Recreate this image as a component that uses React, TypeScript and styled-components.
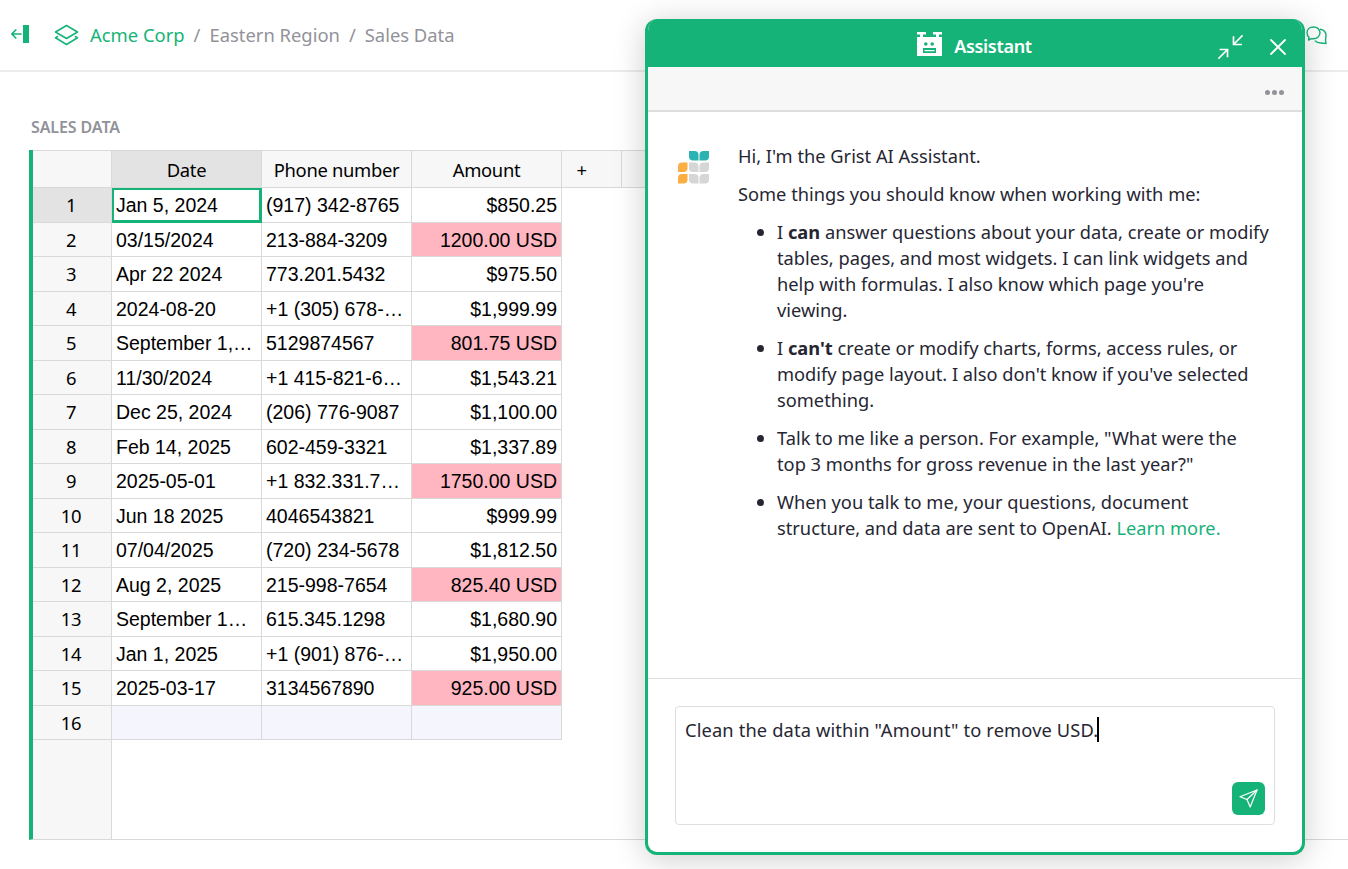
import React from "react";
import styled, { createGlobalStyle } from "styled-components";

const GREEN = "#16b378";
const UI = `"Noto Sans", "Open Sans", sans-serif`;
const CELL = `"Liberation Sans", Arial, sans-serif`;

const Global = createGlobalStyle`
  html, body { margin: 0; padding: 0; height: 869px; overflow: hidden; background: #fff; }
  #root { height: 869px; }
  * { box-sizing: border-box; }
`;

const Page = styled.div`
  width: 1348px;
  height: 869px;
  position: relative;
  font-family: ${UI};
  overflow: hidden;
`;
const TopBar = styled.header`
  height: 72px;
  border-bottom: 2px solid #ececec;
  display: flex;
  align-items: center;
  padding: 0 21px 0 10px;
`;
const Crumbs = styled.nav`
  display: flex;
  align-items: center;
  margin: 0 0 2px 24px;
  font-size: 18.4px;
  color: #929299;
`;
const StackIcon = styled.svg`
  margin-top: 2px;
`;
const CrumbLink = styled.span`
  color: ${GREEN};
  margin-left: 11px;
`;
const Sep = styled.span`
  margin: 0 9px;
`;
const CommentBtn = styled.div`
  margin-left: auto;
  display: flex;
`;
const Section = styled.main`
  padding: 45px 0 0 29px;
`;
const Title = styled.h2`
  margin: 0 0 13px 2px;
  font-size: 16px;
  line-height: 20px;
  font-weight: 600;
  letter-spacing: -0.1px;
  color: #929299;
`;
const GridFrame = styled.section`
  height: 690px;
  border-left: 4px solid ${GREEN};
  border-bottom: 1px solid #d9d9d9;
  display: flex;
  flex-direction: column;
`;
const HeaderRow = styled.div`
  display: flex;
  height: 38px;
  flex: none;
  width: 1272px;
  background: #f7f7f7;
  border-top: 1px solid #d9d9d9;
  border-bottom: 1px solid #d9d9d9;
`;
const HeadCell = styled.div<{ $w: number; $sel?: boolean; $inset?: number }>`
  width: ${(p) => p.$w}px;
  flex: none;
  border-right: 1px solid #d9d9d9;
  background: ${(p) => (p.$sel ? "#e3e3e3" : "#f7f7f7")};
  color: #000;
  font-size: 18.4px;
  letter-spacing: -0.32px;
  display: flex;
  align-items: center;
  justify-content: center;
  padding-right: ${(p) => p.$inset ?? 0}px;
`;
const Row = styled.div`
  display: flex;
  height: 34.5px;
  flex: none;
`;
const RowNum = styled.div<{ $sel?: boolean }>`
  width: 79px;
  flex: none;
  padding-right: 2px;
  background: ${(p) => (p.$sel ? "#e3e3e3" : "#f7f7f7")};
  border-right: 1px solid #d9d9d9;
  border-bottom: 1px solid #d9d9d9;
  display: flex;
  align-items: center;
  justify-content: center;
  font-size: 18.4px;
  letter-spacing: -0.32px;
  color: #000;
`;
const Cell = styled.div<{ $right?: boolean; $pink?: boolean; $new?: boolean; $active?: boolean }>`
  position: relative;
  width: 150px;
  flex: none;
  padding: 0 4px;
  border-right: 1px solid #d9d9d9;
  border-bottom: 1px solid #d9d9d9;
  background: ${(p) => (p.$pink ? "#ffb6c1" : p.$new ? "#f4f5fd" : "#fff")};
  font-family: ${CELL};
  font-size: 19.5px;
  line-height: 35px;
  color: #000;
  text-align: ${(p) => (p.$right ? "right" : "left")};
  white-space: nowrap;
  overflow: hidden;
  text-overflow: ellipsis;
  ${(p) => p.$active && `box-shadow: inset 0 0 0 2px ${GREEN}; border-color: ${GREEN};`}
`;
const Filler = styled.div`
  flex: 1;
  display: flex;
`;
const Gutter = styled.div`
  width: 79px;
  background: #f7f7f7;
  border-right: 1px solid #d9d9d9;
`;
const Panel = styled.aside`
  position: absolute;
  left: 645px;
  top: 19px;
  width: 660px;
  height: 836px;
  border: 3px solid ${GREEN};
  border-top: none;
  border-radius: 12px;
  background: #fff;
  box-shadow: 0 4px 32px rgba(0, 0, 0, 0.2);
  display: flex;
  flex-direction: column;
  overflow: hidden;
`;
const PanelHead = styled.div`
  height: 48px;
  flex: none;
  margin: 0 -3px;
  padding-top: 6px;
  background: ${GREEN};
  position: relative;
  display: flex;
  align-items: center;
  justify-content: center;
  color: #fff;
  font-weight: 600;
  font-size: 18px;
  letter-spacing: -0.3px;
  gap: 12px;
`;
const RobotWrap = styled.div`
  display: flex;
  margin-top: -6px;
  margin-left: -1px;
`;
const HeadActions = styled.div`
  position: absolute;
  right: 18px;
  top: 15px;
  display: flex;
  gap: 25px;
  align-items: center;
`;
const ToolRow = styled.div`
  height: 45px;
  flex: none;
  background: #f7f7f7;
  border-bottom: 2px solid #dedede;
  display: flex;
  align-items: center;
  justify-content: flex-end;
  padding: 7px 18px 0 0;
`;
const Dots = styled.div`
  display: flex;
  gap: 2px;
`;
const Dot = styled.i`
  width: 5px;
  height: 5px;
  border-radius: 50%;
  background: #929299;
`;
const Messages = styled.div`
  flex: 1;
  display: flex;
  padding: 31px 20px 0 30px;
  gap: 27px;
`;
const Avatar = styled.div`
  flex: none;
  width: 33px;
  padding-top: 8px;
`;
const Body = styled.div`
  font-size: 18.25px;
  line-height: 26px;
  color: #262633;
`;
const P = styled.p`
  margin: 0 0 12px;
  white-space: nowrap;
`;
const List = styled.ul`
  margin: 0;
  padding: 0 0 0 39px;
`;
const Item = styled.li`
  margin: 0 0 12px;
  white-space: nowrap;
`;
const LearnMore = styled.span`
  color: ${GREEN};
`;
const Composer = styled.div`
  height: 174px;
  flex: none;
  border-top: 1px solid #dedede;
  padding: 27px 27px 0;
`;
const InputBox = styled.div`
  position: relative;
  height: 119px;
  border: 1px solid #dedede;
  border-radius: 4px;
  padding: 10px 9px;
  font-size: 18.3px;
  letter-spacing: 0.13px;
  line-height: 26px;
  color: #262633;
  display: flex;
  align-items: flex-start;
`;
const Caret = styled.span`
  display: inline-block;
  width: 2px;
  height: 25px;
  background: #000;
  margin-left: -1px;
  flex: none;
`;
const Send = styled.div`
  position: absolute;
  right: 9px;
  bottom: 9px;
  width: 33px;
  height: 33px;
  border-radius: 6px;
  background: ${GREEN};
  display: flex;
  align-items: center;
  justify-content: center;
`;

const rows: [string, string, string, boolean][] = [
  ["Jan 5, 2024", "(917) 342-8765", "$850.25", false],
  ["03/15/2024", "213-884-3209", "1200.00 USD", true],
  ["Apr 22 2024", "773.201.5432", "$975.50", false],
  ["2024-08-20", "+1 (305) 678-9012", "$1,999.99", false],
  ["September 1, 2024", "5129874567", "801.75 USD", true],
  ["11/30/2024", "+1 415-821-6543", "$1,543.21", false],
  ["Dec 25, 2024", "(206) 776-9087", "$1,100.00", false],
  ["Feb 14, 2025", "602-459-3321", "$1,337.89", false],
  ["2025-05-01", "+1 832.331.7788", "1750.00 USD", true],
  ["Jun 18 2025", "4046543821", "$999.99", false],
  ["07/04/2025", "(720) 234-5678", "$1,812.50", false],
  ["Aug 2, 2025", "215-998-7654", "825.40 USD", true],
  ["September 12, 2025", "615.345.1298", "$1,680.90", false],
  ["Jan 1, 2025", "+1 (901) 876-5432", "$1,950.00", false],
  ["2025-03-17", "3134567890", "925.00 USD", true],
];

const LEAF_A = "M0 0H5.5Q9.5 0 9.5 4V9.5H4Q0 9.5 0 5.5Z";
const LEAF_B = "M4 0H9.5V5.5Q9.5 9.5 5.5 9.5H0V4Q0 0 4 0Z";

const Leaf = ({ x, y, fill, d }: { x: number; y: number; fill: string; d: string }) => (
  <path transform={`translate(${x} ${y})`} d={d} fill={fill} />
);

const Logo = () => (
  <svg width="32" height="33" viewBox="0 0 32 33">
    <Leaf x={11} y={0} fill="#2bb3b3" d={LEAF_A} />
    <Leaf x={21.5} y={0} fill="#2bb3b3" d={LEAF_B} />
    <Leaf x={0} y={11.5} fill="#fbae42" d={LEAF_B} />
    <Leaf x={11} y={11.5} fill="#d6d6d6" d={LEAF_A} />
    <Leaf x={21.5} y={11.5} fill="#d6d6d6" d={LEAF_B} />
    <Leaf x={0} y={23} fill="#fbae42" d={LEAF_B} />
    <Leaf x={11} y={23} fill="#d6d6d6" d={LEAF_A} />
    <Leaf x={21.5} y={23} fill="#d6d6d6" d={LEAF_B} />
  </svg>
);

const Robot = () => (
  <svg width="25" height="25" viewBox="0 0 25 25">
    <path fill="#fff" d="M0 1H9V3.5H6V6H19V3.5H16V1H25V3.5H22V6H25V25H0V6H3V3.5H0Z" />
    <circle cx="8.8" cy="13" r="1.8" fill={GREEN} />
    <circle cx="15.2" cy="13" r="1.8" fill={GREEN} />
    <rect x="6" y="17" width="13" height="5" fill={GREEN} />
    <rect x="7.5" y="19" width="10" height="1.2" fill="#fff" />
  </svg>
);

export default function App() {
  return (
    <Page>
      <Global />
      <TopBar>
        <svg width="20" height="20" viewBox="0 0 20 20" fill="none">
          <path d="M11 9H1.8M5.8 5L1.8 9L5.8 13" stroke={GREEN} strokeWidth="1.7" strokeLinecap="round" strokeLinejoin="round" />
          <rect x="13" y="0" width="6" height="18" fill={GREEN} />
        </svg>
        <Crumbs>
          <StackIcon width="25" height="22" viewBox="0 0 25 22" fill="none" stroke={GREEN} strokeWidth="1.6" strokeLinejoin="round" strokeLinecap="round">
            <path d="M12.5 1.5L23.5 8L12.5 14.5L1.5 8Z" />
            <path d="M3.5 12.5L1.5 13.8L12.5 20.5L23.5 13.8L21.5 12.5" />
          </StackIcon>
          <CrumbLink>Acme Corp</CrumbLink>
          <Sep>/</Sep>
          <span>Eastern Region</span>
          <Sep>/</Sep>
          <span>Sales Data</span>
        </Crumbs>
        <CommentBtn>
          <svg width="21" height="19" viewBox="0 0 21 19" fill="none" stroke={GREEN} strokeWidth="1.4" strokeLinejoin="round">
            <path d="M7.5 1C3.8 1 1 3.4 1 6.8C1 8.8 1.8 10.2 3 11.2L2.5 14L5.5 12.6C6.2 12.8 6.8 12.8 7.5 12.8C11.2 12.8 14 10.2 14 6.8C14 3.4 11.2 1 7.5 1Z" />
            <path d="M14 3.2C17.4 3.6 20 6 20 9.5C20 11.4 19.6 12.8 19.5 14L20 17.5L15 17C12 17 10 16 8.8 14.6" />
          </svg>
        </CommentBtn>
      </TopBar>
      <Section>
        <Title>SALES DATA</Title>
        <GridFrame>
          <HeaderRow>
            <HeadCell $w={79} />
            <HeadCell $w={150} $sel>Date</HeadCell>
            <HeadCell $w={150}>Phone number</HeadCell>
            <HeadCell $w={150}>Amount</HeadCell>
            <HeadCell $w={60} $inset={20}>+</HeadCell>
          </HeaderRow>
          {rows.map(([d, ph, a, pink], i) => (
            <Row key={i}>
              <RowNum $sel={i === 0}>{i + 1}</RowNum>
              <Cell $active={i === 0}>{d}</Cell>
              <Cell>{ph}</Cell>
              <Cell $right $pink={pink}>{a}</Cell>
            </Row>
          ))}
          <Row>
            <RowNum>16</RowNum>
            <Cell $new />
            <Cell $new />
            <Cell $new />
          </Row>
          <Filler>
            <Gutter />
          </Filler>
        </GridFrame>
      </Section>
      <Panel>
        <PanelHead>
          <RobotWrap><Robot /></RobotWrap>
          Assistant
          <HeadActions>
            <svg width="27" height="26" viewBox="0 0 27 26" fill="none" stroke="#fff" strokeWidth="1.7" strokeLinecap="square">
              <path d="M2 24L10 16M3.5 15.5H10.5V22.5" />
              <path d="M25 2L17 10M24 10.5H16.5V3" />
            </svg>
            <svg width="18" height="18" viewBox="0 0 18 18" fill="none" stroke="#fff" strokeWidth="1.8" strokeLinecap="round">
              <path d="M2 2L16 16M16 2L2 16" />
            </svg>
          </HeadActions>
        </PanelHead>
        <ToolRow>
          <Dots><Dot /><Dot /><Dot /></Dots>
        </ToolRow>
        <Messages>
          <Avatar><Logo /></Avatar>
          <Body>
            <P>Hi, I'm the Grist AI Assistant.</P>
            <P>Some things you should know when working with me:</P>
            <List>
              <Item>I <b>can</b> answer questions about your data, create or modify<br />tables, pages, and most widgets. I can link widgets and<br />help with formulas. I also know which page you're<br />viewing.</Item>
              <Item>I <b>can't</b> create or modify charts, forms, access rules, or<br />modify page layout. I also don't know if you've selected<br />something.</Item>
              <Item>Talk to me like a person. For example, "What were the<br />top 3 months for gross revenue in the last year?"</Item>
              <Item>When you talk to me, your questions, document<br />structure, and data are sent to OpenAI. <LearnMore>Learn more.</LearnMore></Item>
            </List>
          </Body>
        </Messages>
        <Composer>
          <InputBox>
            <span>Clean the data within "Amount" to remove USD.</span>
            <Caret />
            <Send>
              <svg width="19" height="19" viewBox="0 0 19 19" fill="none" stroke="#fff" strokeWidth="1.2" strokeLinejoin="round" strokeLinecap="round">
                <path d="M18 1L1 7.8L8 10.5L11.2 18L18 1Z" />
                <path d="M8 10.5L18 1" />
              </svg>
            </Send>
          </InputBox>
        </Composer>
      </Panel>
    </Page>
  );
}
